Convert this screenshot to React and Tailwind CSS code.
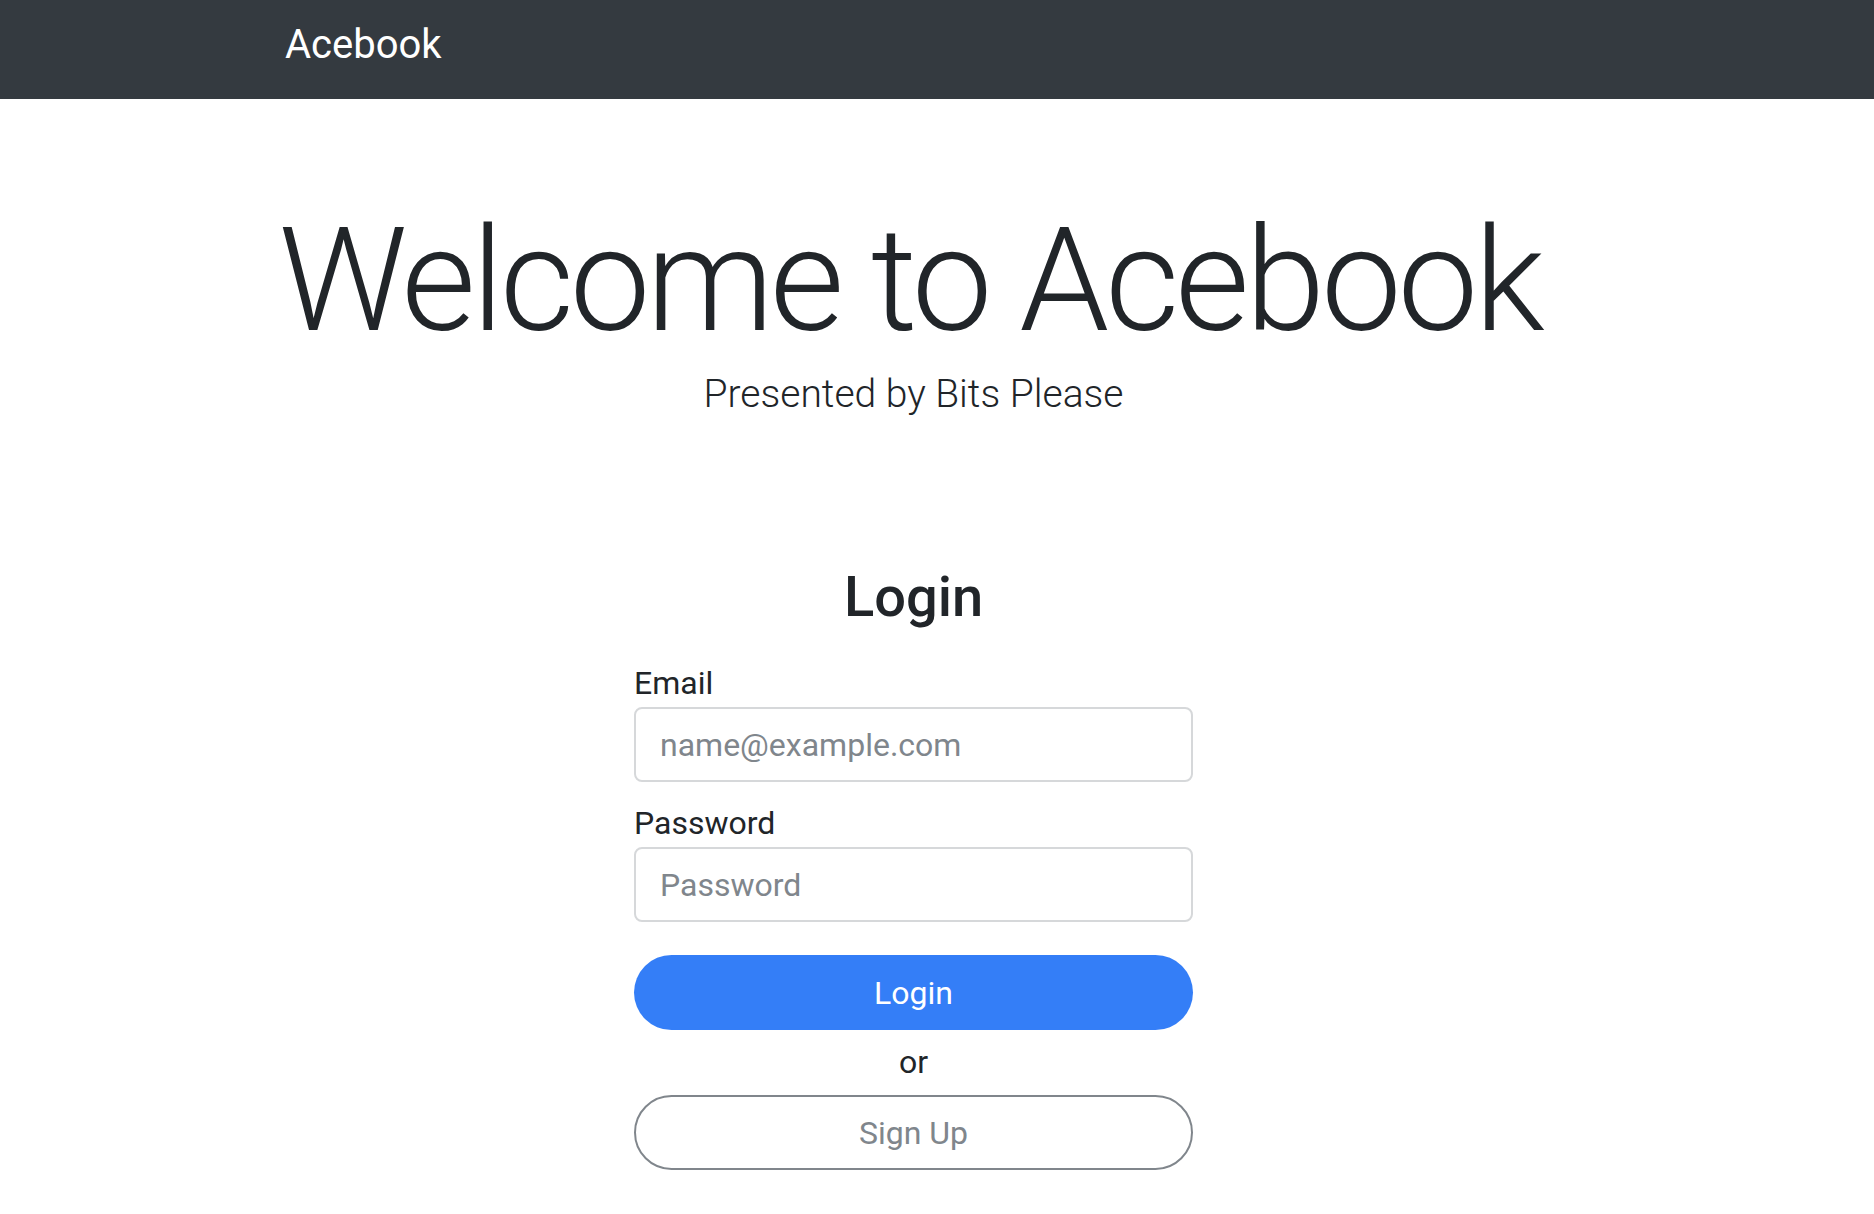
import React from 'react';

const font = "font-['Roboto','Helvetica_Neue','Liberation_Sans',sans-serif]";

const Navbar = () => (
  <nav className="flex items-center h-[99px] bg-[#343a40] pl-[285px]">
    <span className="text-[40px] leading-[60px] text-white pb-[10px]">Acebook</span>
  </nav>
);

const Field = ({ label, type, placeholder, className = '' }) => (
  <div className={`flex flex-col ${className}`}>
    <label className="text-[32px] leading-[48px] text-[#212529]">{label}</label>
    <input
      type={type}
      placeholder={placeholder}
      className="h-[75px] w-full rounded-[8px] border-2 border-[#d6d8da] bg-white px-[24px] text-[32px] text-[#495057] placeholder:text-[#80868c] outline-none"
    />
  </div>
);

export default function App() {
  return (
    <div className={`min-h-screen bg-white text-[#212529] ${font}`}>
      <Navbar />
      <main className="pl-[285px] pr-[332px] text-center">
        {/* hero */}
        <div className="pt-[97px]">
          <h1 className="-ml-[48px] -mr-[40px] whitespace-nowrap text-[144px] leading-[170px] font-light tracking-[-0.029em]">Welcome to Acebook</h1>
          <p className="whitespace-nowrap text-[39px] leading-[57px] font-light">Presented by Bits Please</p>
        </div>

        {/* login form */}
        <div className="mx-auto w-[559px] pt-[141px] pb-[45px]">
          <h3 className="text-[56px] leading-[67px] font-medium">Login</h3>
          <form className="text-left mt-[28px]" onSubmit={(e) => e.preventDefault()}>
            <Field label="Email" type="email" placeholder="name@example.com" />
            <Field label="Password" type="password" placeholder="Password" className="mt-[17px]" />
            <button
              type="submit"
              className="mt-[33px] h-[75px] w-full rounded-full bg-[#347ef7] text-[32px] text-white"
            >
              Login
            </button>
            <p className="mt-[8px] text-center text-[32px] leading-[48px] text-[#212529]">or</p>
            <button
              type="button"
              className="mt-[9px] h-[75px] w-full rounded-full border-2 border-[#80868c] bg-white text-[32px] text-[#80868c]"
            >
              Sign Up
            </button>
          </form>
        </div>
      </main>
    </div>
  );
}
